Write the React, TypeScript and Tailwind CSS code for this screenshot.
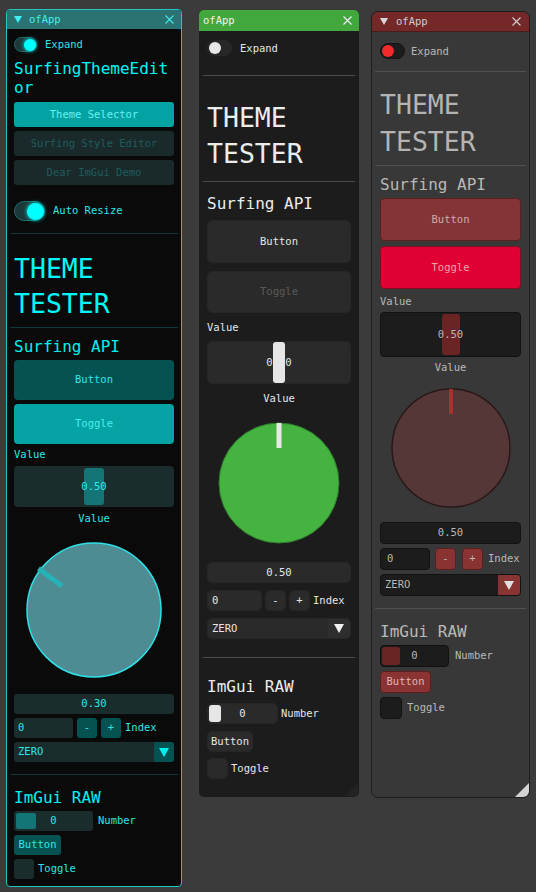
import React from 'react';

type KnobSpec = {
	size: number;
	r: number;
	fill: string;
	stroke: string;
	strokeW: number;
	ind: string;
	line?: [number, number, number, number];
	bar?: [number, number, number, number];
};

type Skin = {
	panel: string;
	title: string;
	arrow: string | null;
	titleText: string;
	close: string;
	body: string;
	toggleRow: string;
	track: string;
	dot: string;
	editor: boolean;
	sepA: string;
	big: string;
	sepB: string;
	h2: string;
	bigBtn: string;
	bigToggle: string;
	label: string;
	slider: string;
	grab: string;
	sliderText: string;
	center: string;
	knobWrap: string;
	knob: KnobSpec;
	field: string;
	row: string;
	input: string;
	minus: string;
	plus: string;
	index: string;
	combo: string;
	comboArrow: string;
	sepC: string;
	raw: string;
	numRow: string;
	numSlider: string;
	numGrab: string;
	btn: string;
	chkRow: string;
	chk: string;
	grip: string | null;
};

const cyan: Skin = {
	panel: 'ml-[6px] mt-[9px] w-[176px] h-[878px] rounded-[4px] border border-[#22c4c4] bg-[#0a0a0a] relative flex flex-col overflow-hidden text-[#2ee6e6]',
	title: 'h-[19px] bg-[#2b7272] flex items-center pl-[7px] pr-[7px] text-[#40eeee]',
	arrow: 'w-[8px] h-[7px] mr-[7px] text-[#40f0f0]',
	titleText: 'text-[10.5px] leading-[13px]',
	close: 'ml-auto w-[9px] h-[9px] text-[#40e8e8]',
	body: 'flex flex-col px-[7px]',
	toggleRow: 'mt-[8px] h-[15px] flex items-center gap-[8px] text-[10.5px] leading-[13px]',
	track: 'w-[23px] h-[15px] rounded-full bg-[#1d3838] border border-[#1b6a6a] flex items-center justify-end',
	dot: 'w-[12px] h-[12px] rounded-full bg-[#00ffff] shadow-[0_0_4px_#00ffff]',
	editor: true,
	sepA: 'mt-[12px] h-px -mx-[4px] bg-[#133636]',
	big: 'mt-[17px] text-[26.5px] leading-[35px] text-[#00f8f8]',
	sepB: 'mt-[6px] h-px -mx-[4px] bg-[#133636]',
	h2: 'mt-[9px] text-[16px] leading-[19px] text-[#00f0f0]',
	bigBtn: 'mt-[4px] h-[40px] rounded-[4px] bg-[#045252] text-[#2ee6e6] flex items-center justify-center text-[10.5px]',
	bigToggle: 'mt-[4px] h-[40px] rounded-[4px] bg-[#05a3a3] text-[#4cecec] flex items-center justify-center text-[10.5px]',
	label: 'mt-[4px] text-[10.5px] leading-[13px]',
	slider: 'mt-[5px] h-[41px] rounded-[4px] bg-[#1b2c2c] relative flex items-center justify-center',
	grab: 'w-[20px] h-[37px] rounded-[3px] bg-[#137575]',
	sliderText: 'text-[#30eaea]',
	center: 'mt-[5px] text-center text-[10.5px] leading-[13px]',
	knobWrap: 'mt-[17px] flex justify-center',
	knob: { size: 136, r: 67, fill: '#4e8b93', stroke: '#2ee0e6', strokeW: 1.5, ind: '#26b3b8', line: [12.5, 26.5, 36, 44] },
	field: 'mt-[16px] h-[20px] rounded-[3px] bg-[#1b2c2c] flex items-center justify-center text-[10.5px]',
	row: 'mt-[4px] h-[20px] flex items-center text-[10.5px]',
	input: 'w-[59px] h-full rounded-[3px] bg-[#1b2c2c] pl-[4px] flex items-center',
	minus: 'ml-[4px] w-[20px] h-full rounded-[3px] bg-[#045252] flex items-center justify-center',
	plus: 'ml-[4px] w-[20px] h-full rounded-[3px] bg-[#045252] flex items-center justify-center',
	index: 'ml-[4px]',
	combo: 'mt-[4px] h-[20px] rounded-[3px] bg-[#1b2c2c] flex items-center overflow-hidden text-[10.5px]',
	comboArrow: 'ml-auto w-[20px] h-full bg-[#045252] flex items-center justify-center text-[#00f0f0]',
	sepC: 'mt-[12px] h-px -mx-[4px] bg-[#133636]',
	raw: 'mt-[13px] text-[16px] leading-[19px] text-[#00f0f0]',
	numRow: 'mt-[4px] h-[20px] flex items-center text-[10.5px]',
	numSlider: 'w-[79px] h-full rounded-[3px] bg-[#1b2c2c] relative flex items-center pl-[2px] mr-[5px]',
	numGrab: 'w-[20px] h-[16px] rounded-[2px] bg-[#137575]',
	btn: 'mt-[4px] h-[20px] w-[47px] rounded-[3px] bg-[#045252] flex items-center justify-center text-[10.5px]',
	chkRow: 'mt-[4px] h-[20px] flex items-center gap-[4px] text-[10.5px]',
	chk: 'w-[20px] h-[20px] rounded-[3px] bg-[#1b2c2c]',
	grip: null,
};

const green: Skin = {
	panel: 'ml-[17px] mt-[10px] w-[160px] h-[787px] rounded-[5px] bg-[#1c1c1c] relative flex flex-col overflow-hidden text-[#e6e6e6]',
	title: 'h-[21px] bg-[#42a83e] flex items-center pl-[4px] pr-[7px] text-[#f2f2f2]',
	arrow: null,
	titleText: 'text-[10.5px] leading-[13px]',
	close: 'ml-auto w-[9px] h-[9px] text-[#f2f2f2]',
	body: 'flex flex-col px-[8px]',
	toggleRow: 'mt-[9px] h-[16px] flex items-center gap-[8px] text-[10.5px] leading-[13px]',
	track: 'w-[25px] h-[16px] rounded-full bg-[#272727] flex items-center pl-[2px]',
	dot: 'w-[12px] h-[12px] rounded-full bg-[#e8e8e8]',
	editor: false,
	sepA: 'mt-[19px] h-px -mx-[4px] bg-[#4a4a4a]',
	big: 'mt-[24px] text-[26.5px] leading-[36px] text-[#ececec]',
	sepB: 'mt-[9px] h-px -mx-[4px] bg-[#4a4a4a]',
	h2: 'mt-[12px] text-[16px] leading-[19px] text-[#ececec]',
	bigBtn: 'mt-[7px] h-[43px] rounded-[5px] bg-[#2a2a2a] border border-[#262626] flex items-center justify-center text-[10.5px]',
	bigToggle: 'mt-[8px] h-[42px] rounded-[5px] bg-[#2a2a2a] border border-[#262626] text-[#5a5a5a] flex items-center justify-center text-[10.5px]',
	label: 'mt-[8px] text-[10.5px] leading-[13px]',
	slider: 'mt-[7px] h-[43px] rounded-[5px] bg-[#2a2a2a] border border-[#262626] relative flex items-center justify-center',
	grab: 'w-[12px] h-[41px] rounded-[3px] bg-[#e6e6e6]',
	sliderText: 'text-[#e6e6e6]',
	center: 'mt-[8px] text-center text-[10.5px] leading-[13px]',
	knobWrap: 'mt-[17px] flex justify-center',
	knob: { size: 122, r: 60, fill: '#45b340', stroke: '#2e7a2b', strokeW: 1, ind: '#e8e8e8', bar: [58.5, 1, 5, 25] },
	field: 'mt-[18px] h-[21px] rounded-[5px] bg-[#2a2a2a] border border-[#262626] flex items-center justify-center text-[10.5px]',
	row: 'mt-[7px] h-[21px] flex items-center text-[10.5px]',
	input: 'w-[55px] h-full rounded-[5px] bg-[#2a2a2a] border border-[#262626] pl-[4px] flex items-center',
	minus: 'ml-[3px] w-[21px] h-full rounded-[5px] bg-[#2a2a2a] border border-[#262626] flex items-center justify-center',
	plus: 'ml-[3px] w-[21px] h-full rounded-[5px] bg-[#2a2a2a] border border-[#262626] flex items-center justify-center',
	index: 'ml-[3px]',
	combo: 'mt-[7px] h-[21px] rounded-[5px] bg-[#2a2a2a] border border-[#262626] flex items-center overflow-hidden text-[10.5px]',
	comboArrow: 'ml-auto w-[22px] h-full bg-[#2e2e2e] flex items-center justify-center text-[#f0f0f0]',
	sepC: 'mt-[18px] h-px -mx-[4px] bg-[#4a4a4a]',
	raw: 'mt-[19px] text-[16px] leading-[19px] text-[#ececec]',
	numRow: 'mt-[7px] h-[21px] flex items-center text-[10.5px]',
	numSlider: 'w-[71px] h-full rounded-[5px] bg-[#2a2a2a] border border-[#262626] relative flex items-center pl-[1px] mr-[3px]',
	numGrab: 'w-[12px] h-[17px] rounded-[3px] bg-[#e6e6e6]',
	btn: 'mt-[7px] h-[21px] w-[46px] rounded-[5px] bg-[#2a2a2a] border border-[#262626] flex items-center justify-center text-[10.5px]',
	chkRow: 'mt-[6px] h-[21px] flex items-center gap-[3px] text-[10.5px]',
	chk: 'w-[21px] h-[21px] rounded-[5px] bg-[#2a2a2a] border border-[#262626]',
	grip: 'absolute right-[1px] bottom-[1px] w-[13px] h-[13px] text-[#232323]',
};

const red: Skin = {
	panel: 'ml-[12px] mt-[11px] w-[159px] h-[787px] rounded-[7px] border border-[#1e1e1e] bg-[#383838] relative flex flex-col overflow-hidden text-[#b8b8b8]',
	title: 'h-[20px] bg-[#742828] border-b border-[#4a1c1c] flex items-center pl-[8px] pr-[8px] text-[#cccccc]',
	arrow: 'w-[8px] h-[7px] mr-[8px] text-[#d8d8d8]',
	titleText: 'text-[10.5px] leading-[13px]',
	close: 'ml-auto w-[9px] h-[9px] text-[#d0d0d0]',
	body: 'flex flex-col px-[8px]',
	toggleRow: 'mt-[11px] h-[16px] flex items-center gap-[6px] text-[10.5px] leading-[13px]',
	track: 'w-[25px] h-[16px] rounded-full bg-[#1c1c1c] border border-[#141414] flex items-center pl-[1px]',
	dot: 'w-[12px] h-[12px] rounded-full bg-[#f22a2a]',
	editor: false,
	sepA: 'mt-[12px] h-px -mx-[5px] bg-[#505050]',
	big: 'mt-[14px] text-[26.5px] leading-[37px] text-[#b4b4b4]',
	sepB: 'mt-[5px] h-px -mx-[5px] bg-[#505050]',
	h2: 'mt-[9px] text-[16px] leading-[19px] text-[#b8b8b8]',
	bigBtn: 'mt-[4px] h-[43px] rounded-[4px] bg-[#843434] border border-[#5c1f1f] text-[#d4a8a8] flex items-center justify-center text-[10.5px]',
	bigToggle: 'mt-[5px] h-[43px] rounded-[4px] bg-[#e00034] border border-[#7a1020] text-[#eda2ae] flex items-center justify-center text-[10.5px]',
	label: 'mt-[6px] text-[10.5px] leading-[13px]',
	slider: 'mt-[4px] h-[45px] rounded-[4px] bg-[#1c1c1c] border border-[#121212] relative flex items-center justify-center',
	grab: 'w-[18px] h-[41px] rounded-[3px] bg-[#6b2424]',
	sliderText: 'text-[#b8b8b8]',
	center: 'mt-[4px] text-center text-[10.5px] leading-[13px]',
	knobWrap: 'mt-[14px] flex justify-center',
	knob: { size: 120, r: 59, fill: '#553737', stroke: '#2a1818', strokeW: 1.5, ind: '#a83232', bar: [58, 1, 4, 25] },
	field: 'mt-[14px] h-[22px] rounded-[4px] bg-[#1c1c1c] border border-[#121212] flex items-center justify-center text-[10.5px]',
	row: 'mt-[4px] h-[22px] flex items-center text-[10.5px]',
	input: 'w-[50px] h-full rounded-[4px] bg-[#1c1c1c] border border-[#121212] pl-[6px] flex items-center',
	minus: 'ml-[5px] w-[21px] h-full rounded-[4px] bg-[#8a3333] border border-[#5c1f1f] flex items-center justify-center',
	plus: 'ml-[6px] w-[21px] h-full rounded-[4px] bg-[#8a3333] border border-[#5c1f1f] flex items-center justify-center',
	index: 'ml-[5px]',
	combo: 'mt-[4px] h-[22px] rounded-[4px] bg-[#1c1c1c] border border-[#121212] flex items-center overflow-hidden text-[10.5px]',
	comboArrow: 'ml-auto w-[22px] h-full bg-[#8a3333] flex items-center justify-center text-[#e0e0e0]',
	sepC: 'mt-[12px] h-px -mx-[5px] bg-[#505050]',
	raw: 'mt-[13px] text-[16px] leading-[19px] text-[#b8b8b8]',
	numRow: 'mt-[4px] h-[22px] flex items-center text-[10.5px]',
	numSlider: 'w-[69px] h-full rounded-[4px] bg-[#1c1c1c] border border-[#121212] relative flex items-center pl-[1px] mr-[6px]',
	numGrab: 'w-[18px] h-[18px] rounded-[3px] bg-[#6b2424]',
	btn: 'mt-[4px] h-[22px] w-[51px] rounded-[4px] bg-[#8a3333] border border-[#5c1f1f] text-[#e2b4b4] flex items-center justify-center text-[10.5px]',
	chkRow: 'mt-[4px] h-[22px] flex items-center gap-[5px] text-[10.5px]',
	chk: 'w-[22px] h-[22px] rounded-[4px] bg-[#1c1c1c] border border-[#121212]',
	grip: 'absolute right-0 bottom-0 w-[14px] h-[14px] text-[#d4d4d4]',
};

const Tri = ({ className }: { className: string }) => (
	<svg viewBox="0 0 8 7" className={className}>
		<polygon points="0,0 8,0 4,7" fill="currentColor" />
	</svg>
);

const Knob = ({ k }: { k: KnobSpec }) => {
	const c = k.size / 2;
	return (
		<svg width={k.size} height={k.size} viewBox={`0 0 ${k.size} ${k.size}`}>
			<circle cx={c} cy={c} r={k.r} fill={k.fill} stroke={k.stroke} strokeWidth={k.strokeW} />
			{k.line && <line x1={k.line[0]} y1={k.line[1]} x2={k.line[2]} y2={k.line[3]} stroke={k.ind} strokeWidth={5} />}
			{k.bar && <rect x={k.bar[0]} y={k.bar[1]} width={k.bar[2]} height={k.bar[3]} fill={k.ind} />}
		</svg>
	);
};

const Panel = ({ s }: { s: Skin }) => (
	<div className={s.panel}>
		<div className={s.title}>
			{s.arrow && <Tri className={s.arrow} />}
			<span className={s.titleText}>ofApp</span>
			<svg viewBox="0 0 9 9" className={s.close}>
				<path d="M0.5 0.5 L8.5 8.5 M8.5 0.5 L0.5 8.5" stroke="currentColor" strokeWidth={1.1} />
			</svg>
		</div>
		<div className={s.body}>
			<div className={s.toggleRow}>
				<div className={s.track}>
					<div className={s.dot} />
				</div>
				<span>Expand</span>
			</div>
			{s.editor && (
				<>
					<div className="mt-[7px] text-[16px] leading-[19px] text-[#00f5f5] break-all">SurfingThemeEditor</div>
					<div className="mt-[5px] h-[25px] rounded-[3px] bg-[#04a3a3] text-[#66f2f2] flex items-center justify-center text-[10.5px]">
						Theme Selector
					</div>
					<div className="mt-[4px] h-[25px] rounded-[3px] bg-[#1a2a2a] text-[#1f5c5c] flex items-center justify-center text-[10.5px]">
						Surfing Style Editor
					</div>
					<div className="mt-[4px] h-[25px] rounded-[3px] bg-[#1a2a2a] text-[#1f5c5c] flex items-center justify-center text-[10.5px]">
						Dear ImGui Demo
					</div>
					<div className="mt-[16px] h-[20px] flex items-center gap-[8px] text-[10.5px]">
						<div className="w-[31px] h-[20px] rounded-full bg-[#1d3838] border border-[#1b6a6a] flex items-center justify-end">
							<div className="w-[17px] h-[17px] rounded-full bg-[#00ffff] shadow-[0_0_4px_#00ffff]" />
						</div>
						<span>Auto Resize</span>
					</div>
				</>
			)}
			<div className={s.sepA} />
			<div className={s.big}>THEME TESTER</div>
			<div className={s.sepB} />
			<div className={s.h2}>Surfing API</div>
			<div className={s.bigBtn}>Button</div>
			<div className={s.bigToggle}>Toggle</div>
			<div className={s.label}>Value</div>
			<div className={s.slider}>
				<div className={s.grab} />
				<span className={`absolute inset-0 flex items-center justify-center text-[10.5px] ${s.sliderText}`}>0.50</span>
			</div>
			<div className={s.center}>Value</div>
			<div className={s.knobWrap}>
				<Knob k={s.knob} />
			</div>
			<div className={s.field}>{s.editor ? '0.30' : '0.50'}</div>
			<div className={s.row}>
				<div className={s.input}>0</div>
				<div className={s.minus}>-</div>
				<div className={s.plus}>+</div>
				<span className={s.index}>Index</span>
			</div>
			<div className={s.combo}>
				<span className="pl-[4px]">ZERO</span>
				<div className={s.comboArrow}>
					<svg viewBox="0 0 10 9" className="w-[10px] h-[9px]">
						<polygon points="0,0 10,0 5,9" fill="currentColor" />
					</svg>
				</div>
			</div>
			<div className={s.sepC} />
			<div className={s.raw}>ImGui RAW</div>
			<div className={s.numRow}>
				<div className={s.numSlider}>
					<div className={s.numGrab} />
					<span className="absolute inset-0 flex items-center justify-center">0</span>
				</div>
				<span>Number</span>
			</div>
			<div className={s.btn}>Button</div>
			<div className={s.chkRow}>
				<div className={s.chk} />
				<span>Toggle</span>
			</div>
		</div>
		{s.grip && (
			<svg viewBox="0 0 14 14" className={s.grip}>
				<polygon points="14,0 14,14 0,14" fill="currentColor" />
			</svg>
		)}
	</div>
);

export default function App() {
	return (
		<div className="w-[536px] h-[892px] bg-[#3b3b3b] flex items-start font-['DejaVu_Sans_Mono',monospace] overflow-hidden">
			<Panel s={cyan} />
			<Panel s={green} />
			<Panel s={red} />
		</div>
	);
}
